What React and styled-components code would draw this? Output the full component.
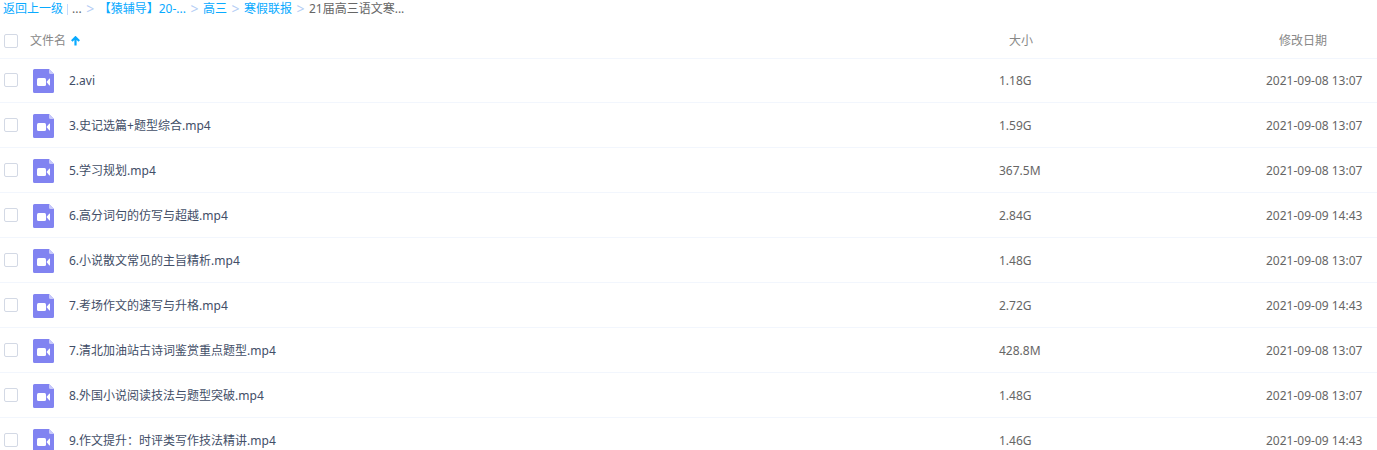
import React, { useState } from "react";
import styled, { createGlobalStyle } from "styled-components";

const GlobalStyle = createGlobalStyle`
  body {
    margin: 0;
    background: #fff;
    color: #424e67;
    font-family: "Noto Sans", "Noto Sans CJK SC", sans-serif;
    font-size: 12px;
    line-height: 18px;
  }
`;

const Breadcrumb = styled.nav`
  display: flex;
  align-items: center;
  height: 18px;
  padding-left: 3px;
  color: #666;
  white-space: nowrap;
`;

const Crumb = styled.a`
  color: #09aaff;
  text-decoration: none;
  &:hover {
    text-decoration: underline;
  }
`;

const Divider = styled.span`
  width: 1px;
  height: 11px;
  margin: 0 4px;
  background: #c4dbfe;
`;

const Arrow = styled.span`
  width: 17px;
  color: #b4cdf5;
  font-size: 14px;
  text-align: center;
`;

const Table = styled.table`
  width: 100%;
  table-layout: fixed;
  border-collapse: separate;
  border-spacing: 0;
`;

const HeadCell = styled.th`
  box-sizing: border-box;
  width: ${(props) => props.$width || "auto"};
  height: 41px;
  padding: 5px 0 0 ${(props) => props.$indent || 0}px;
  border-bottom: 1px solid #f2f6fd;
  color: #888;
  font-weight: normal;
  text-align: left;
  white-space: nowrap;
`;

const Cell = styled.td`
  box-sizing: border-box;
  height: 45px;
  padding: 2px 0 0 ${(props) => props.$indent || 0}px;
  border-bottom: 1px solid #f2f6fd;
  color: ${(props) => props.$color || "#666"};
  white-space: nowrap;
`;

const CheckCell = styled(Cell)`
  padding-top: 0;
`;

const Row = styled.tr`
  &:first-child > ${Cell} {
    height: 44px;
    padding-top: 0;
  }
  &:first-child > ${CheckCell} {
    padding-bottom: 1px;
  }
  &:hover {
    background: #f4fbff;
  }
`;

const Checkbox = styled.input`
  appearance: none;
  display: block;
  box-sizing: border-box;
  width: 14px;
  height: 14px;
  margin: 0;
  border: 1px solid #d3d9e5;
  border-radius: 2px;
  background: #fff;
  cursor: pointer;
  &:checked {
    border-color: #09aaff;
    background: #09aaff;
  }
`;

const SortButton = styled.button`
  display: flex;
  align-items: center;
  gap: 5px;
  padding: 0;
  border: 0;
  background: none;
  color: inherit;
  font: inherit;
  cursor: pointer;
`;

const SortArrow = styled.svg`
  display: block;
  transform: ${(props) => (props.$down ? "rotate(180deg)" : "none")};
`;

const FileName = styled.label`
  display: flex;
  align-items: center;
  gap: 15px;
`;

const VideoIcon = () => (
  <svg width="21" height="24" viewBox="0 0 21 24" aria-hidden="true">
    <path d="M1.5 0H16L21 5V22.5A1.5 1.5 0 0 1 19.5 24H1.5A1.5 1.5 0 0 1 0 22.5V1.5A1.5 1.5 0 0 1 1.5 0Z" fill="#8183f1" />
    <path d="M16 0L21 5H17.5A1.5 1.5 0 0 1 16 3.5Z" fill="#c8c9fa" />
    <rect x="4" y="9" width="9" height="8" rx="1.5" fill="#fff" />
    <path d="M13.5 13L16.2 9.8Q17 9 17 10V16Q17 17 16.2 16.2Z" fill="#fff" />
  </svg>
);

const crumbs = ["【猿辅导】20-...", "高三", "寒假联报"];

const initialFiles = [
  { name: "2.avi", size: "1.18G", date: "2021-09-08 13:07" },
  { name: "3.史记选篇+题型综合.mp4", size: "1.59G", date: "2021-09-08 13:07" },
  { name: "5.学习规划.mp4", size: "367.5M", date: "2021-09-08 13:07" },
  { name: "6.高分词句的仿写与超越.mp4", size: "2.84G", date: "2021-09-09 14:43" },
  { name: "6.小说散文常见的主旨精析.mp4", size: "1.48G", date: "2021-09-08 13:07" },
  { name: "7.考场作文的速写与升格.mp4", size: "2.72G", date: "2021-09-09 14:43" },
  { name: "7.清北加油站古诗词鉴赏重点题型.mp4", size: "428.8M", date: "2021-09-08 13:07" },
  { name: "8.外国小说阅读技法与题型突破.mp4", size: "1.48G", date: "2021-09-08 13:07" },
  { name: "9.作文提升：时评类写作技法精讲.mp4", size: "1.46G", date: "2021-09-09 14:43" },
];

const App = () => {
  const [selected, setSelected] = useState([]);
  const [descending, setDescending] = useState(false);

  const files = descending ? [...initialFiles].reverse() : initialFiles;
  const allSelected = selected.length === files.length;

  const toggleAll = () => {
    setSelected(allSelected ? [] : files.map((file) => file.name));
  };

  const toggleFile = (name) => {
    setSelected((prev) =>
      prev.includes(name) ? prev.filter((item) => item !== name) : [...prev, name]
    );
  };

  return (
    <>
      <GlobalStyle />
      <Breadcrumb>
        <Crumb href="#up">返回上一级</Crumb>
        <Divider />
        <span>...</span>
        <Arrow>&gt;</Arrow>
        {crumbs.map((crumb) => (
          <React.Fragment key={crumb}>
            <Crumb href="#folder">{crumb}</Crumb>
            <Arrow>&gt;</Arrow>
          </React.Fragment>
        ))}
        <span>21届高三语文寒...</span>
      </Breadcrumb>
      <Table>
        <thead>
          <tr>
            <HeadCell $width="30px" $indent={4}>
              <Checkbox type="checkbox" aria-label="全选" checked={allSelected} onChange={toggleAll} />
            </HeadCell>
            <HeadCell>
              <SortButton type="button" onClick={() => setDescending(!descending)}>
                文件名
                <SortArrow $down={descending} width="9" height="10" viewBox="0 0 9 10">
                  <path d="M0.8 5L4.5 1.3L8.2 5M4.5 1.5V9.5" fill="none" stroke="#09aaff" strokeWidth="2.2" />
                </SortArrow>
              </SortButton>
            </HeadCell>
            <HeadCell $width="267px" $indent={10}>大小</HeadCell>
            <HeadCell $width="111px" $indent={13}>修改日期</HeadCell>
          </tr>
        </thead>
        <tbody>
          {files.map((file, index) => (
            <Row key={file.name}>
              <CheckCell $indent={4}>
                <Checkbox
                  type="checkbox"
                  id={`file-${index}`}
                  checked={selected.includes(file.name)}
                  onChange={() => toggleFile(file.name)}
                />
              </CheckCell>
              <Cell $indent={3} $color="#424e67">
                <FileName htmlFor={`file-${index}`}>
                  <VideoIcon />
                  {file.name}
                </FileName>
              </Cell>
              <Cell>{file.size}</Cell>
              <Cell>{file.date}</Cell>
            </Row>
          ))}
        </tbody>
      </Table>
    </>
  );
};

export default App;
